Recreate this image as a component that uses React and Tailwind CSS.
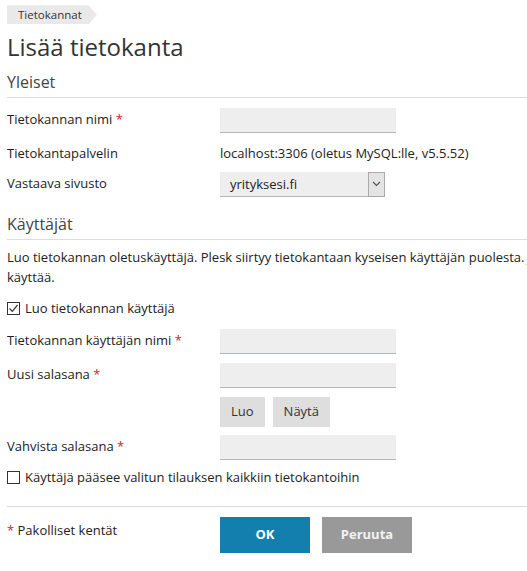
import React from "react";

const Req = () => <span className="text-[#d4202a]">*</span>;

const TextInput = () => (
  <div className="w-[176px] h-[25px] bg-[#eeeeee] border-b border-[#aeb6be]" />
);

const CheckBox = ({ checked }) => (
  <span className="w-[13px] h-[13px] border border-[#333] bg-white flex items-center justify-center shrink-0">
    {checked && (
      <svg width="11" height="11" viewBox="0 0 11 11">
        <path d="M1.5 5.5 L4.3 8.3 L9.5 2" fill="none" stroke="#333" strokeWidth="1.2" />
      </svg>
    )}
  </span>
);

const Row = ({ label, className = "", children }) => (
  <div className={"flex items-center " + className}>
    <div className="w-[213px] shrink-0">{label}</div>
    {children}
  </div>
);

const App = () => {
  return (
    <div className="w-[527px] h-[571px] overflow-hidden bg-white text-[13px] text-[#222] font-['Open_Sans',sans-serif]">
      <div className="w-[640px] pl-[7px]">
        {/* Breadcrumb */}
        <div className="pt-[5px]">
          <span className="inline-flex items-center h-[19px] pl-[11px] pr-[15px] bg-[#e9e9e9] text-[11.5px] text-[#333] [clip-path:polygon(0_0,calc(100%-8px)_0,100%_50%,calc(100%-8px)_100%,0_100%)]">
            Tietokannat
          </span>
        </div>
        <h1 className="text-[24px] leading-[32px] text-[#333] mt-[6px]">Lisää tietokanta</h1>

        {/* Yleiset */}
        <div className="w-[520px] mt-[7px] border-b border-[#dcdcdc] pb-[3px]">
          <h2 className="text-[16px] leading-[24px] text-[#444]">Yleiset</h2>
        </div>

        <Row className="mt-[10px]" label={<>Tietokannan nimi <Req /></>}>
          <TextInput />
        </Row>
        <Row className="mt-[7px] h-[25px] pt-[4px]" label="Tietokantapalvelin">
          <span>localhost:3306 (oletus MySQL:lle, v5.5.52)</span>
        </Row>
        <Row className="mt-[7px]" label="Vastaava sivusto">
          <div className="w-[165px] h-[25px] flex bg-[#eeeeee] border-b border-[#aeb6be]">
            <span className="flex-1 pl-[10px] leading-[25px] text-[#222]">yrityksesi.fi</span>
            <span className="w-[17px] h-[25px] border border-[#aaaaaa] bg-[#e4e4e4] flex items-center justify-center">
              <svg width="9" height="6" viewBox="0 0 9 6">
                <path d="M1 1 L4.5 4.5 L8 1" fill="none" stroke="#555" strokeWidth="1.2" />
              </svg>
            </span>
          </div>
        </Row>

        {/* Käyttäjät */}
        <div className="w-[520px] mt-[15px] border-b border-[#dcdcdc] pb-[3px]">
          <h2 className="text-[16px] leading-[24px] text-[#444]">Käyttäjät</h2>
        </div>
        <p className="mt-[7px] leading-[20px]">
          <span className="whitespace-nowrap">
            Luo tietokannan oletuskäyttäjä. Plesk siirtyy tietokantaan kyseisen käyttäjän puolesta. Jos
          </span>
          <br />
          käyttää.
        </p>
        <label className="flex items-center gap-[5px] mt-[12px] h-[20px]">
          <CheckBox checked />
          <span>Luo tietokannan käyttäjä</span>
        </label>

        <Row className="mt-[10px]" label={<>Tietokannan käyttäjän nimi <Req /></>}>
          <TextInput />
        </Row>
        <Row className="mt-[9px]" label={<>Uusi salasana <Req /></>}>
          <TextInput />
        </Row>
        <Row className="mt-[9px]" label="">
          <div className="flex gap-[8px]">
            <button className="h-[30px] px-[11px] bg-[#dedede] text-[#333]">Luo</button>
            <button className="h-[30px] px-[11px] bg-[#dedede] text-[#333]">Näytä</button>
          </div>
        </Row>
        <Row className="mt-[8px]" label={<>Vahvista salasana <Req /></>}>
          <TextInput />
        </Row>
        <label className="flex items-center gap-[5px] mt-[8px] h-[20px]">
          <CheckBox />
          <span>Käyttäjä pääsee valitun tilauksen kaikkiin tietokantoihin</span>
        </label>

        {/* Footer */}
        <div className="w-[520px] mt-[18px] border-t border-[#dcdcdc] pt-[10px] flex items-start">
          <div className="w-[213px] shrink-0 pt-[4px]">
            <Req /> Pakolliset kentät
          </div>
          <div className="flex gap-[12px]">
            <button className="w-[90px] h-[36px] bg-[#137fae] text-white font-bold">OK</button>
            <button className="w-[90px] h-[36px] bg-[#999999] text-[#f2f2f2] font-bold">Peruuta</button>
          </div>
        </div>
      </div>
    </div>
  );
};

export default App;
